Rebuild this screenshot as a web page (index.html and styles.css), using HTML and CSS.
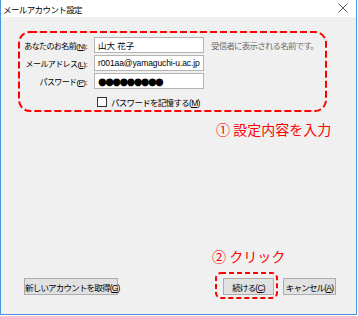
FILE: index.html
```html
<!DOCTYPE html>
<html lang="ja">
<head>
<meta charset="utf-8">
<link rel="stylesheet" href="styles.css">
</head>
<body>
<div class="window">
  <div class="titlebar">
    <span class="title">メールアカウント設定</span>
    <svg class="close" width="10" height="10" viewBox="0 0 10 10"><path d="M0.5 0.5 L9.5 9.5 M9.5 0.5 L0.5 9.5" stroke="#555" stroke-width="1" fill="none"/></svg>
  </div>
  <div class="content">
    <div class="form">
      <label class="lbl">あなたのお名前(<u>N</u>):</label>
      <div class="input">山大 花子</div>
      <div class="hint">受信者に表示される名前です。</div>
      <label class="lbl">メールアドレス(<u>L</u>):</label>
      <div class="input latin">r001aa@yamaguchi-u.ac.jp</div>
      <div></div>
      <label class="lbl">パスワード(<u>P</u>):</label>
      <div class="input pw">●●●●●●●●●</div>
      <div></div>
      <div></div>
      <div class="check"><span class="box"></span><span>パスワードを記憶する(<u>M</u>)</span></div>
    </div>
    <div class="buttons">
      <button class="btn new">新しいアカウントを取得(<u>G</u>)</button>
      <div class="right">
        <button class="btn cont">続ける(<u>C</u>)</button>
        <button class="btn cancel">キャンセル(<u>A</u>)</button>
      </div>
    </div>
  </div>
  <svg class="mark mark1" width="310" height="82" viewBox="0 0 310 82"><rect x="1" y="1" width="307" height="79" rx="11" ry="11" fill="none" stroke="#ff0000" stroke-width="2" stroke-dasharray="7 3"/></svg>
  <div class="note note1">① 設定内容を入力</div>
  <svg class="mark mark2" width="64" height="28" viewBox="0 0 64 28"><rect x="1" y="1" width="61" height="25" rx="5" ry="5" fill="none" stroke="#ff0000" stroke-width="2" stroke-dasharray="5 3"/></svg>
  <div class="note note2">② クリック</div>
</div>
</body>
</html>
```

FILE: styles.css
```css
* { box-sizing: border-box; }
html, body { margin: 0; padding: 0; }
body {
  width: 358px;
  height: 316px;
  background: #ffffff;
  font-family: "Liberation Sans", "Noto Sans CJK JP", sans-serif;
  font-size: 8.5px;
  color: #000;
}
u { text-decoration: underline; }
.window {
  position: relative;
  width: 357px;
  height: 315px;
  border-left: 1px solid #4a95dc;
  border-right: 1px solid #4a95dc;
  border-bottom: 1px solid #4a95dc;
  display: flex;
  flex-direction: column;
}
.titlebar {
  height: 17px;
  background: #fff;
  display: flex;
  align-items: center;
  justify-content: space-between;
  padding: 0 5px 0 2px;
}
.title {
  font-size: 8.5px;
  letter-spacing: -0.6px;
  color: #000;
}
.close { margin-top: -1px; margin-right: 3px; }
.content {
  flex: 1;
  background: #f0f0f0;
  display: flex;
  flex-direction: column;
  justify-content: space-between;
  padding: 20px 20px 19px 23px;
}
.form {
  display: grid;
  grid-template-columns: 75px 110px auto;
  column-gap: 5px;
  row-gap: 2px;
  align-items: center;
  margin-left: -10px;
}
.lbl {
  text-align: right;
  white-space: nowrap;
  letter-spacing: -0.6px;
  font-size: 8px;
  padding-right: 2px;
}
.input {
  height: 16px;
  background: #fff;
  border: 1px solid #b4b4b4;
  padding: 0 3px;
  display: flex;
  align-items: center;
  font-size: 8.5px;
  white-space: nowrap;
  overflow: hidden;
}
.input.latin {
  letter-spacing: -0.1px;
}
.input.pw { font-size: 10px; letter-spacing: -1.6px; font-family: "DejaVu Sans", sans-serif; }
.hint {
  color: #6d6d6d;
  padding-left: 2px;
  letter-spacing: -0.8px;
  white-space: nowrap;
}
.check {
  grid-column: 2 / 4;
  display: flex;
  align-items: center;
  gap: 4px;
  margin-top: 5px;
  padding-left: 3px;
  letter-spacing: -0.7px;
  white-space: nowrap;
}
.box {
  width: 10px;
  height: 10px;
  background: #fff;
  border: 1px solid #333;
}
.buttons {
  display: flex;
  justify-content: space-between;
  align-items: center;
}
.right { display: flex; gap: 9px; }
.btn {
  height: 17px;
  background: #e1e1e1;
  border: 1px solid #adadad;
  font-family: inherit;
  font-size: 8.5px;
  letter-spacing: -0.8px;
  padding: 0;
  color: #000;
  white-space: nowrap;
  text-align: center;
}
.btn.new { width: 94px; }
.btn.cont { width: 51px; }
.btn.cancel { width: 53px; }
.mark { position: absolute; }
.mark1 { left: 17px; top: 31px; }
.mark2 { left: 214px; top: 272px; }
.note {
  position: absolute;
  color: #ff0000;
  font-family: "Noto Sans CJK JP", sans-serif;
  font-size: 14px;
  line-height: 16px;
  white-space: nowrap;
}
.note1 { left: 215px; top: 121px; }
.note2 { left: 211px; top: 248px; }
```
